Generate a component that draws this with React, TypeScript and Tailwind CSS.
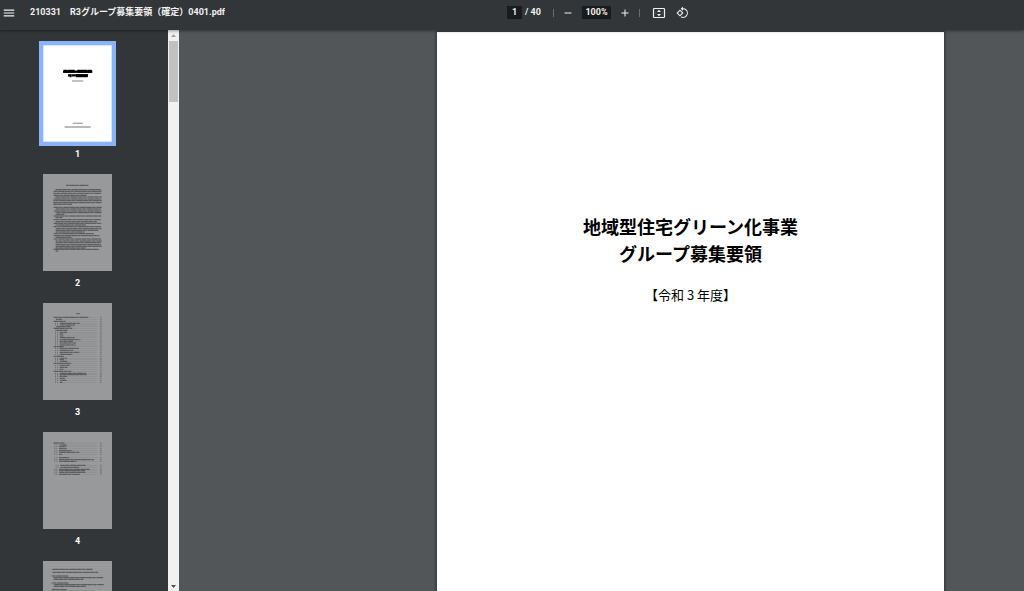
import { MdAdd, MdMenu, MdRemove, MdRotate90DegreesCcw } from 'react-icons/md';

// One printed line of a miniature page: x, y, width
type Line = [number, number, number];

type Thumb = {
  page: number;
  lines: Line[];
  leaders?: boolean;
  partial?: boolean;
};

const bodyLines: Line[] = [
  [69, 34, 67],
  [37, 47, 138], [31, 52, 144], [31, 58, 144], [31, 64, 100], [37, 69, 139],
  [31, 75, 144], [31, 80, 145], [31, 86, 144], [31, 91, 56],
  [32, 100, 144], [38, 105, 136], [32, 111, 143], [38, 116, 138], [38, 121, 26],
  [32, 126, 143], [38, 131, 20], [32, 137, 142], [38, 143, 124],
  [32, 148, 144], [38, 153, 90], [32, 158, 142], [38, 164, 138], [38, 169, 128], [38, 174, 86],
  [32, 179, 120], [32, 185, 138], [38, 190, 50], [32, 195, 142], [38, 201, 138],
  [38, 206, 137], [38, 212, 136], [38, 217, 138], [38, 222, 90], [32, 226, 136], [38, 231, 8],
];

const contentsLines: Line[] = [
  [99, 32, 11],
  [32, 43, 104], [39, 49, 18], [32, 55, 36], [50, 61, 60], [50, 66, 46], [39, 71, 44],
  [32, 76, 56], [36, 82, 38], [50, 88, 22], [50, 93, 11], [50, 99, 11], [50, 104, 45],
  [50, 110, 62], [50, 115, 40], [50, 120, 49], [50, 126, 49], [32, 131, 30], [50, 136, 58],
  [50, 142, 41], [50, 148, 59], [50, 154, 39], [32, 160, 31], [50, 166, 22], [50, 170, 13],
  [50, 175, 23], [32, 181, 53], [50, 187, 30], [50, 193, 24], [50, 199, 11], [32, 205, 53],
  [50, 211, 79], [50, 215, 81], [50, 220, 23], [50, 226, 16], [50, 232, 21], [50, 238, 9],
];

const appendixLines: Line[] = [
  [32, 33, 33], [48, 39, 23], [48, 44, 23], [48, 50, 23], [48, 56, 40], [48, 61, 61], [48, 67, 11],
  [48, 77, 31], [48, 83, 105], [48, 88, 53],
  [52, 100, 77], [52, 106, 57], [48, 112, 93], [48, 116, 78], [48, 121, 81], [48, 127, 63],
];

const noticeLines: Line[] = [
  [26, 25, 123], [29, 34, 137],
  [26, 45, 50], [32, 50, 149], [32, 55, 89],
  [26, 66, 50], [32, 71, 150], [32, 76, 98],
  [26, 86, 45], [32, 91, 120], [32, 97, 142],
];

const thumbs: Thumb[] = [
  { page: 2, lines: bodyLines },
  { page: 3, lines: contentsLines, leaders: true },
  { page: 4, lines: appendixLines, leaders: true },
  { page: 5, lines: noticeLines, partial: true },
];

export default function App() {
  return (
    <div className="flex h-screen flex-col overflow-hidden bg-[#525659] font-['Roboto','Noto_Sans_CJK_JP',sans-serif]">
      <Toolbar />
      <div className="flex min-h-0 flex-1">
        <Sidebar />
        <Scrollbar />
        <main className="flex min-w-0 flex-1 justify-end overflow-hidden pt-0.5 pr-20">
          <article className="h-[717px] w-[507px] shrink-0 bg-white pt-[181px] text-center font-['Noto_Sans_CJK_JP',sans-serif] text-black shadow-[0_0_3px_1px_rgba(0,0,0,0.4)]">
            <h1 className="text-[18px] leading-[27px] font-bold">
              地域型住宅グリーン化事業
              <br />
              グループ募集要領
            </h1>
            <p className="mt-[18px] text-[13px] leading-5">【令和 3 年度】</p>
          </article>
        </main>
      </div>
    </div>
  );
}

function Toolbar() {
  return (
    <header className="z-10 flex h-[30px] shrink-0 items-center bg-[#323639] pb-[5px] text-[9px] font-bold text-[#f1f1f1] shadow-[0_1px_3px_rgba(0,0,0,0.4)]">
      <div className="flex min-w-0 flex-1 items-center gap-3.5 pl-0.5">
        <button type="button" aria-label="Menu" className="shrink-0">
          <MdMenu size={14} />
        </button>
        <span className="truncate">210331　R3グループ募集要領（確定）0401.pdf</span>
      </div>
      <div className="flex items-center">
        <input
          type="text"
          aria-label="Page number"
          defaultValue="1"
          className="h-[13px] w-[15px] bg-[#191b1c] text-center"
        />
        <span className="ml-[3px] w-4 whitespace-nowrap">/ 40</span>
        <span className="mr-2 ml-3 h-2 w-px bg-[#6a6d70]" />
        <button type="button" aria-label="Zoom out">
          <MdRemove size={12} />
        </button>
        <input
          type="text"
          aria-label="Zoom level"
          defaultValue="100%"
          className="mx-2 h-[13px] w-[29px] bg-[#191b1c] text-center"
        />
        <button type="button" aria-label="Zoom in">
          <MdAdd size={12} />
        </button>
        <span className="mr-3 ml-2 h-2 w-px bg-[#6a6d70]" />
        <button type="button" aria-label="Fit to page">
          <FitIcon />
        </button>
        <button type="button" aria-label="Rotate counterclockwise" className="ml-2.5">
          <MdRotate90DegreesCcw size={13} />
        </button>
      </div>
      <div className="w-[335px]" />
    </header>
  );
}

function FitIcon() {
  return (
    <svg width="14" height="12" viewBox="0 0 14 12" fill="none" className="block">
      <rect x="1.5" y="1.5" width="11" height="9" rx="0.8" stroke="currentColor" strokeWidth="1.2" />
      <path d="M7 2.7 9 5H5ZM7 9.3 5 7h4Z" fill="currentColor" />
      <path d="M3.2 6h1M9.8 6h1" stroke="currentColor" strokeWidth="0.6" opacity="0.5" />
    </svg>
  );
}

function Sidebar() {
  return (
    <nav aria-label="Pages" className="flex w-[168px] shrink-0 flex-col gap-2 overflow-hidden bg-[#323639] pt-[15px] pr-[13px]">
      <PageButton page={1} selected>
        <CoverThumb />
      </PageButton>
      {thumbs.map(t => (
        <PageButton key={t.page} page={t.page} partial={t.partial}>
          <TextThumb lines={t.lines} leaders={t.leaders} />
        </PageButton>
      ))}
    </nav>
  );
}

function PageButton({
  page,
  selected,
  partial,
  children,
}: {
  page: number;
  selected?: boolean;
  partial?: boolean;
  children: React.ReactNode;
}) {
  return (
    <button
      type="button"
      aria-label={`Page ${page}`}
      aria-current={selected ? 'page' : undefined}
      className="flex shrink-0 flex-col items-center"
    >
      <span className={`block h-[97px] w-[69px] ${selected ? 'bg-white ring-4 ring-[#8ab4f8]' : 'bg-[#98999b]'}`}>
        {children}
      </span>
      {!partial && <span className="mt-1 h-5 text-[9px] leading-4 font-bold text-white">{page}</span>}
    </button>
  );
}

function CoverThumb() {
  return (
    <svg viewBox="0 0 207 291" className="block size-full" stroke="#000">
      <rect x="1" y="1" width="205" height="289" fill="none" stroke="#c5dafb" strokeWidth="2" />
      <path d="M60 80h88" strokeWidth="7" />
      <path d="M62 79h84" strokeWidth="9" strokeDasharray="12 1 20 8 30 1" />
      <path d="M75 91h60" strokeWidth="7" strokeDasharray="10 1 70" />
      <path d="M80 92h54" strokeWidth="9" strokeDasharray="5 14 40" />
      <path d="M87 108h34" strokeWidth="4" opacity="0.35" />
      <path d="M89 235h30" strokeWidth="4" opacity="0.35" />
      <path d="M65 246h78" strokeWidth="4" opacity="0.4" />
    </svg>
  );
}

function TextThumb({ lines, leaders }: { lines: Line[]; leaders?: boolean }) {
  return (
    <svg viewBox="0 0 207 291" className="block size-full" stroke="#1c1d1e">
      {lines.map(([x, y, w]) => {
        const entry = leaders && x < 60;
        return (
          <g key={y}>
            <path d={`M${x} ${y}h${w}`} strokeWidth="3" opacity="0.4" />
            <path
              d={`M${x} ${y}h${w}`}
              strokeWidth="3"
              strokeDasharray="13 4 7 6 17 3"
              strokeDashoffset={(y * 7) % 50}
              opacity="0.25"
            />
            {entry && x > 40 && <path d={`M${x - 14} ${y}h9`} strokeWidth="3" strokeDasharray="3 3" opacity="0.4" />}
            {entry && <path d={`M${x + w + 2} ${y}H161`} strokeWidth="2" opacity="0.1" />}
            {entry && <path d={`M171 ${y}h5`} strokeWidth="3" opacity="0.3" />}
          </g>
        );
      })}
    </svg>
  );
}

function Scrollbar() {
  return (
    <div aria-hidden="true" className="flex w-[11px] shrink-0 flex-col items-center bg-[#f1f1f1]">
      <svg width="11" height="11" viewBox="0 0 11 11" fill="#a3a3a3">
        <path d="M5.5 4 8 7H3Z" />
      </svg>
      <div className="h-[61px] w-[9px] bg-[#c1c1c1]" />
      <svg width="11" height="11" viewBox="0 0 11 11" fill="#505050" className="mt-auto">
        <path d="M5.5 8 3 5h5Z" />
      </svg>
    </div>
  );
}
